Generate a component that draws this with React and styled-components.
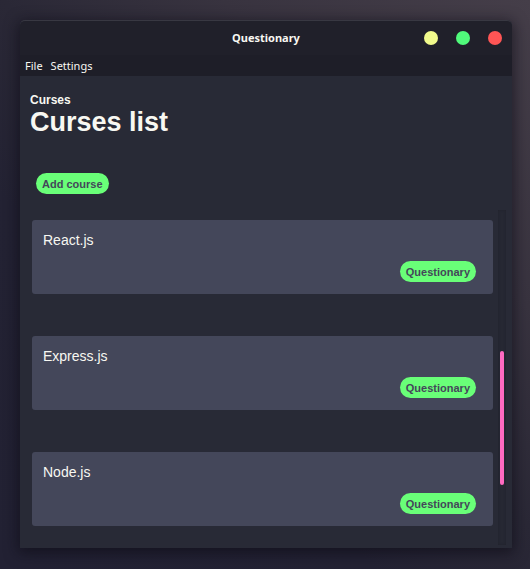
import React from "react";
import styled, { createGlobalStyle } from "styled-components";

const GlobalStyle = createGlobalStyle`
  *, *::before, *::after { box-sizing: border-box; }
  body { margin: 0; background: #232232; }
  button { font: inherit; border: 0; cursor: pointer; }
`;

const Desktop = styled.div`
  display: flex;
  min-height: 100vh;
  padding: 20px 18px 21px 20px;
  background: linear-gradient(225deg, #453e49 0%, #38333f 28%, #2a2836 48%, #232233 66%, #222133 100%);
  font-family: "Liberation Sans", Arial, sans-serif;
  color: #f8f8f2;
`;

const Window = styled.div`
  flex: 1;
  min-width: 0;
  display: flex;
  flex-direction: column;
  background: #282a36;
  border-radius: 5px 5px 0 0;
  box-shadow: 0 3px 14px 2px rgba(12, 10, 20, 0.6);
`;

const TitleBar = styled.header`
  display: grid;
  grid-template-columns: 1fr auto 1fr;
  align-items: center;
  height: 35px;
  padding: 0 10px;
  background: #20202a;
  border-top: 1px solid #383842;
  border-radius: 5px 5px 0 0;
`;

const WindowTitle = styled.div`
  grid-column: 2;
  font: 700 11px/18px "Noto Sans", sans-serif;
`;

const Controls = styled.div`
  display: flex;
  justify-content: flex-end;
  gap: 18px;
`;

const ControlButton = styled.button`
  width: 14px;
  height: 14px;
  padding: 0;
  border-radius: 50%;
  background: ${(p) => p.$color};
`;

const MenuBar = styled.nav`
  display: flex;
  gap: 8px;
  height: 21px;
  padding: 0 5px;
  background: #1e1e28;
`;

const MenuButton = styled.button`
  && { font: 400 11px/21px "Noto Sans", sans-serif; }
  padding: 0;
  color: #f8f8f2;
  background: none;
`;

const Content = styled.main`
  flex: 1;
  display: flex;
  flex-direction: column;
  align-items: stretch;
  padding: 17px 6px 3px 10px;
`;

const Overline = styled.div`
  font-size: 12px;
  line-height: 14px;
  font-weight: 700;
`;

const Heading = styled.h1`
  margin: 0;
  font-size: 27px;
  line-height: 30px;
  font-weight: 700;
`;

const PillButton = styled.button`
  && { font-weight: 700; font-size: 11px; line-height: 13px; }
  padding: 5px 6px 3px;
  border-radius: 11px;
  color: #44475a;
  background: #69ff78;
`;

const Actions = styled.div`
  display: flex;
  padding: 36px 6px 16px;
`;

const ListArea = styled.section`
  flex: 1;
  display: grid;
  grid-template-columns: 1fr 8px;
  gap: 5px;
`;

const CourseList = styled.ul`
  display: flex;
  flex-direction: column;
  gap: 42px;
  margin: 0;
  padding: 10px 0 19px 2px;
  list-style: none;
`;

const Card = styled.li`
  display: flex;
  flex-direction: column;
  justify-content: space-between;
  height: 74px;
  padding: 12px 17px 12px 11px;
  border-radius: 3px;
  background: #44475a;

  ${PillButton} { align-self: flex-end; }
`;

const CourseName = styled.div`
  font-size: 14px;
  line-height: 16px;
`;

const Track = styled.div`
  display: flex;
  flex-direction: column;
  align-items: center;
  background: #262833;
  box-shadow: inset 0 0 3px #20222c;
`;

const Space = styled.div`
  flex: ${(p) => p.$share} 0 0;
`;

const Thumb = styled.div`
  flex: 40 0 0;
  width: 4px;
  border-radius: 2px;
  background: #ff6ac1;
`;

const controls = [
  { label: "Minimize", color: "#f1fa8c" },
  { label: "Maximize", color: "#50fa7b" },
  { label: "Close", color: "#ff5555" },
];

const courses = ["React.js", "Express.js", "Node.js"];

export default function App() {
  return (
    <Desktop>
      <GlobalStyle />
      <Window>
        <TitleBar>
          <WindowTitle>Questionary</WindowTitle>
          <Controls>
            {controls.map((c) => (
              <ControlButton key={c.label} type="button" aria-label={c.label} $color={c.color} />
            ))}
          </Controls>
        </TitleBar>
        <MenuBar>
          <MenuButton type="button">File</MenuButton>
          <MenuButton type="button">Settings</MenuButton>
        </MenuBar>
        <Content>
          <Overline>Curses</Overline>
          <Heading>Curses list</Heading>
          <Actions>
            <PillButton type="button">Add course</PillButton>
          </Actions>
          <ListArea>
            <CourseList id="courses">
              {courses.map((name) => (
                <Card key={name}>
                  <CourseName>{name}</CourseName>
                  <PillButton type="button">Questionary</PillButton>
                </Card>
              ))}
            </CourseList>
            <Track role="scrollbar" aria-controls="courses" aria-orientation="vertical" aria-valuenow={70} aria-valuemin={0} aria-valuemax={100}>
              <Space $share={42} />
              <Thumb />
              <Space $share={18} />
            </Track>
          </ListArea>
        </Content>
      </Window>
    </Desktop>
  );
}
